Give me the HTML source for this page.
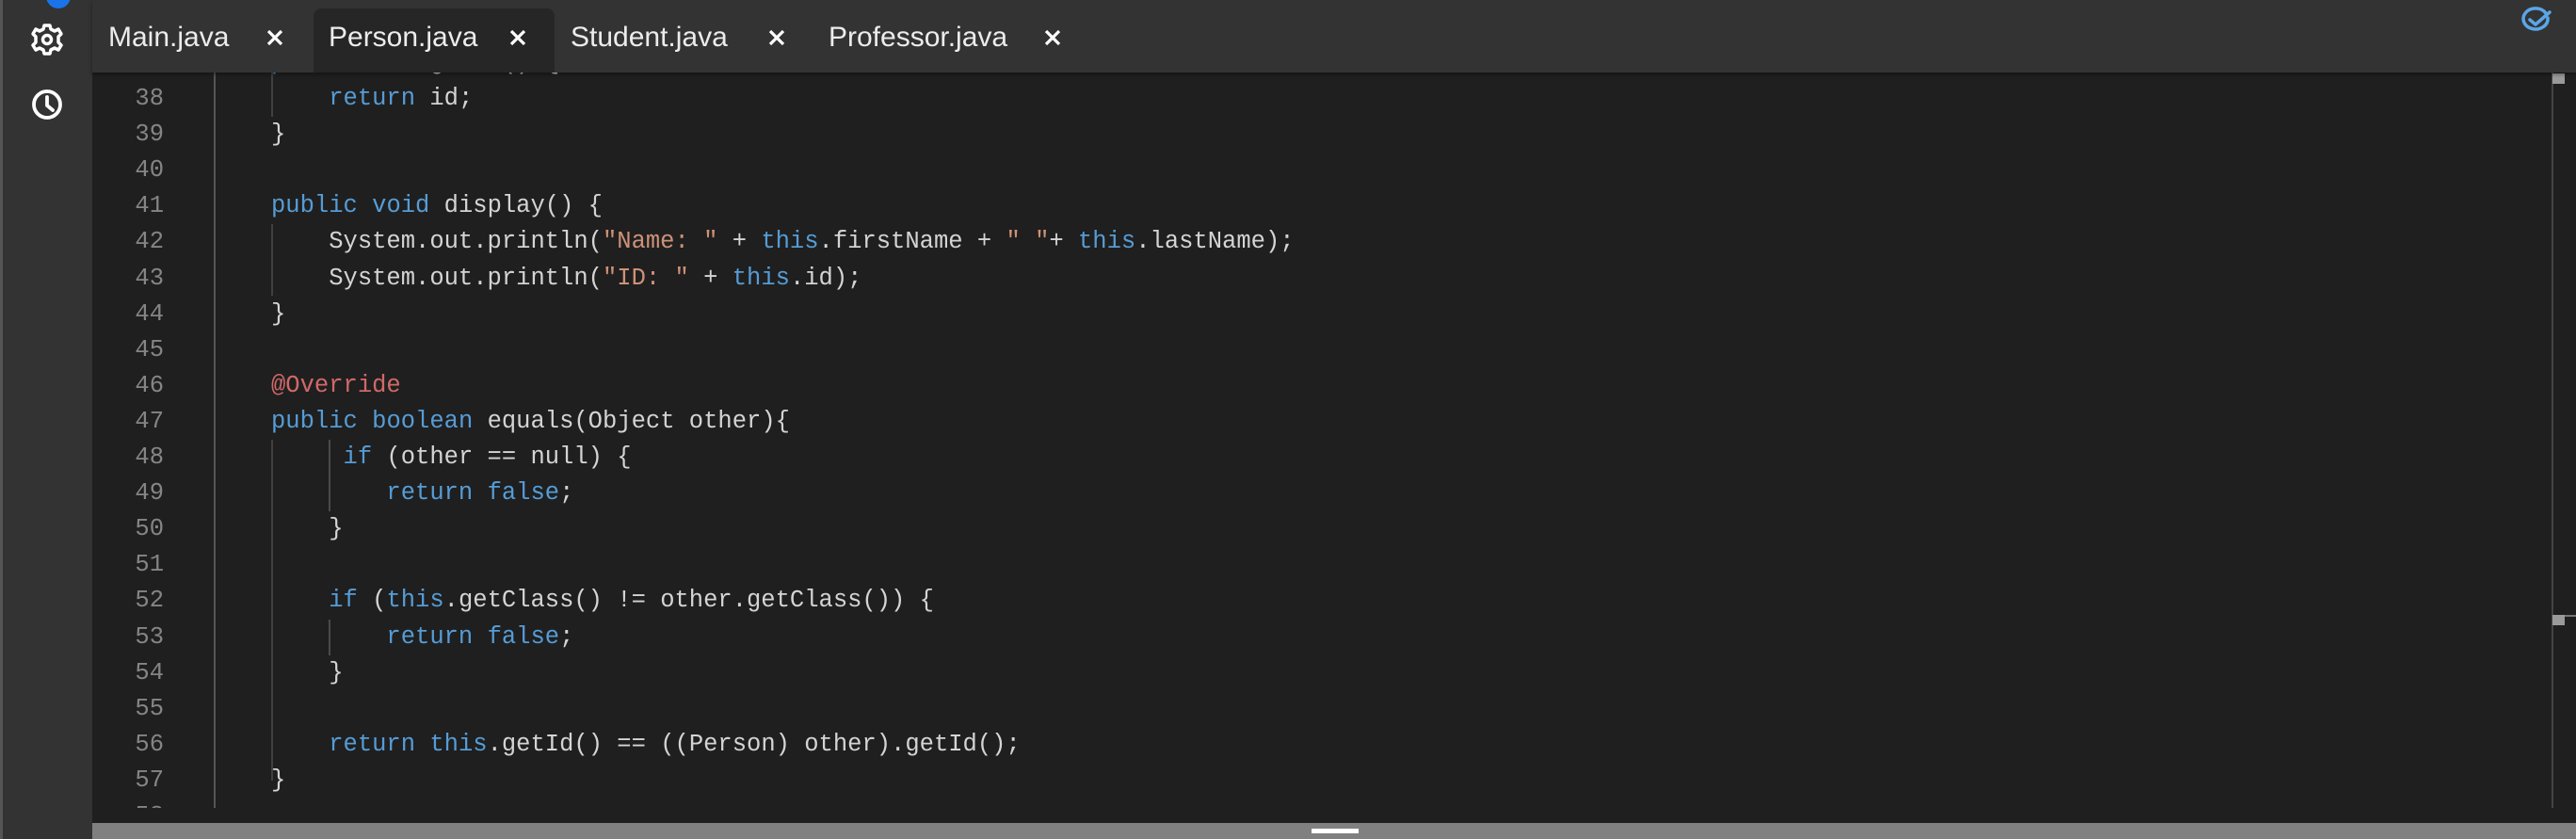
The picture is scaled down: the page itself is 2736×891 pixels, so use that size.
<!DOCTYPE html>
<html><head><meta charset="utf-8"><style>
*{margin:0;padding:0;box-sizing:border-box}
body{width:2736px;height:891px;overflow:hidden;background:#1f1f1f;position:relative;font-family:"Liberation Sans",sans-serif}
#side{position:absolute;left:0;top:0;width:98px;height:891px;background:#333;border-left:3px solid #555}
#top{position:absolute;left:98px;top:0;width:2638px;height:77px;background:#333;box-shadow:0 2px 4px rgba(0,0,0,.4);z-index:3}
.tab{position:absolute;top:0;height:77px;color:#ececec;font-size:30px;line-height:80px}
.active{position:absolute;left:235px;top:9px;width:256px;height:68px;background:#262626;border-radius:8px 8px 0 0}
.x{position:absolute;top:31px}
#ed{position:absolute;left:98px;top:77px;width:2612px;height:781px;overflow:hidden;background:#1f1f1f}
.ln{position:absolute;left:0;width:76px;text-align:right;color:#858585;font:25.5px/38.1px "Liberation Mono",monospace}
.cd{position:absolute;left:190px;white-space:pre;color:#d4d4d4;font:25.5px/38.1px "Liberation Mono",monospace}
.k{color:#569cd6}.s{color:#ce9178}.a{color:#d16969}
.g{position:absolute;width:2px;background:#404040}
</style></head><body>
<div id="side">
<svg style="position:absolute;left:-3px;top:0" width="98" height="140">
<circle cx="62" cy="-4" r="13" fill="#1a73e8"/>
<g transform="translate(50,42)" fill="none" stroke="#fff" stroke-width="3.5" stroke-linejoin="round">
<path d="M-3,-15 L3,-15 L4,-11 L8,-9 L12,-11 L15,-6 L12,-3 L12,3 L15,6 L12,11 L8,9 L4,11 L3,15 L-3,15 L-4,11 L-8,9 L-12,11 L-15,6 L-12,3 L-12,-3 L-15,-6 L-12,-11 L-8,-9 L-4,-11 Z"/>
<circle r="4.5"/></g>
<g transform="translate(50,111)" fill="none" stroke="#fff" stroke-width="3.8" stroke-linecap="round">
<circle r="14"/><path d="M0,-8 L0,1 L6,6"/></g>
</svg>
</div>
<div id="top">
<div class="active"></div>
<div class="tab" style="left:17px">Main.java</div>
<div class="tab" style="left:251px">Person.java</div>
<div class="tab" style="left:508px">Student.java</div>
<div class="tab" style="left:782px">Professor.java</div>
<svg class="x" style="left:185px" width="18" height="18"><path d="M2,2L16,16M16,2L2,16" stroke="#fff" stroke-width="3.2"/></svg>
<svg class="x" style="left:443px" width="18" height="18"><path d="M2,2L16,16M16,2L2,16" stroke="#fff" stroke-width="3.2"/></svg>
<svg class="x" style="left:718px" width="18" height="18"><path d="M2,2L16,16M16,2L2,16" stroke="#fff" stroke-width="3.2"/></svg>
<svg class="x" style="left:1011px" width="18" height="18"><path d="M2,2L16,16M16,2L2,16" stroke="#fff" stroke-width="3.2"/></svg>
<svg style="position:absolute;left:2578px;top:6px" width="40" height="30"><path d="M30,13 A13,11 0 1 1 28,8" fill="none" stroke="#5aa6e8" stroke-width="3.5" stroke-linecap="round"/><path d="M11,15 L17,20 L32,7" fill="none" stroke="#5aa6e8" stroke-width="3.5" stroke-linecap="round" stroke-linejoin="round"/></svg>
</div>
<div id="ed">
<div class="g" style="left:129px;top:0;height:781px;background:#555"></div>
<div class="g" style="left:190px;top:0;height:47px"></div>
<div class="g" style="left:190px;top:161px;height:76px"></div>
<div class="g" style="left:190px;top:390px;height:362px"></div>
<div class="g" style="left:251px;top:390px;height:76px;background:#4a4a4a"></div>
<div class="g" style="left:251px;top:581px;height:38px;background:#4a4a4a"></div>
<div class="ln" style="top:-29px">37<br>38<br>39<br>40<br>41<br>42<br>43<br>44<br>45<br>46<br>47<br>48<br>49<br>50<br>51<br>52<br>53<br>54<br>55<br>56<br>57<br>58</div>
<div class="cd" style="top:-29px"><span class="k">public</span> <span class="k">int</span> getId() {
    <span class="k">return</span> id;
}

<span class="k">public</span> <span class="k">void</span> display() {
    System.out.println(<span class="s">"Name: "</span> + <span class="k">this</span>.firstName + <span class="s">" "</span>+ <span class="k">this</span>.lastName);
    System.out.println(<span class="s">"ID: "</span> + <span class="k">this</span>.id);
}

<span class="a">@Override</span>
<span class="k">public</span> <span class="k">boolean</span> equals(Object other){
     <span class="k">if</span> (other == null) {
        <span class="k">return</span> <span class="k">false</span>;
    }

    <span class="k">if</span> (<span class="k">this</span>.getClass() != other.getClass()) {
        <span class="k">return</span> <span class="k">false</span>;
    }

    <span class="k">return</span> <span class="k">this</span>.getId() == ((Person) other).getId();
}
</div>
</div>
<div style="position:absolute;left:2710px;top:77px;width:2px;height:781px;background:#444"></div>
<div style="position:absolute;left:2711px;top:78px;width:13px;height:11px;background:#9a9a9a"></div>
<div style="position:absolute;left:2711px;top:653px;width:13px;height:11px;background:#9a9a9a"></div>
<div style="position:absolute;left:2724px;top:653px;width:12px;height:2px;background:#777"></div>
<div style="position:absolute;left:98px;top:874px;width:2638px;height:17px;background:#808080"></div>
<div style="position:absolute;left:1393px;top:880px;width:50px;height:5px;background:#fff"></div>
</body></html>
